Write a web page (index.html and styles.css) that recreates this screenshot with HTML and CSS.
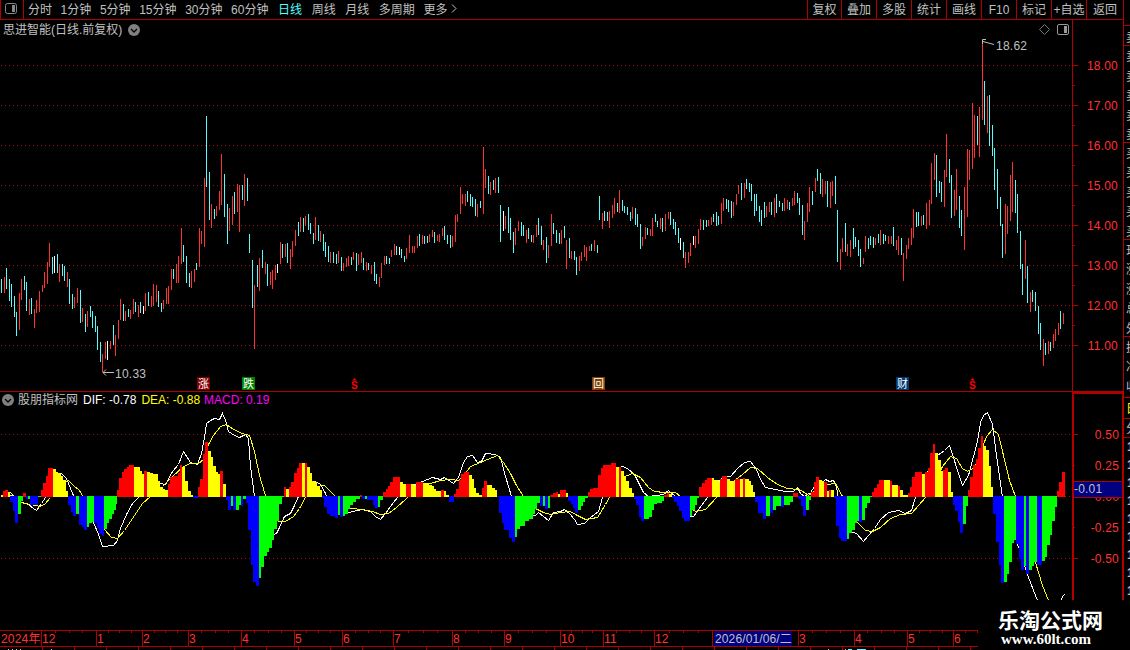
FILE: index.html
```
<!DOCTYPE html>
<html lang="zh-CN">
<head>
  <meta charset="UTF-8" />
  <title>思进智能 - 日线</title>
  <link rel="stylesheet" href="styles.css">
</head>
<body>

  <div class="terminal">
    <div class="main">
      <nav class="toolbar">
        <div class="layout-btn">
          <svg width="12" height="11"><rect x=".5" y=".5" width="11" height="10" rx="2" fill="none" stroke="#888"/><rect x="7" y="2" width="3" height="7" fill="#888"/></svg>
        </div>
        <div class="periods">
          <span>分时</span><span>1分钟</span><span>5分钟</span><span>15分钟</span><span>30分钟</span><span>60分钟</span>
          <span class="active">日线</span><span class="wide">周线</span><span class="wide">月线</span><span>多周期</span><span>更多</span>
          <svg class="more" width="6" height="9"><path d="M1 .5L5 4.5L1 8.5" fill="none" stroke="#c0c0c0"/></svg>
        </div>
        <div class="tools">
          <span>复权</span><span>叠加</span><span>多股</span><span>统计</span><span>画线</span><span>F10</span><span>标记</span><span>+自选</span><span>返回</span>
        </div>
      </nav>

      <section class="panel price">
        <header class="panel-head">
          <span>思进智能(日线.前复权)</span>
          <svg class="chevron" width="12" height="12"><circle cx="6" cy="6" r="6" fill="#808080"/><path d="M3 5L6 8L9 5" fill="none" stroke="#000" stroke-width="1.3"/></svg>
          <div class="head-icons">
            <svg width="11" height="11"><path d="M5.5 .5L10.5 5.5L5.5 10.5L.5 5.5Z" fill="none" stroke="#777"/></svg>
            <svg width="12" height="11"><rect x=".5" y=".5" width="11" height="10" rx="1.5" fill="none" stroke="#999"/><rect x="7" y="2" width="3" height="7" fill="#999"/></svg>
          </div>
        </header>
        <div class="plot">
          <svg id="price" width="1078" height="351" viewBox="0 40 1078 351"></svg>
          <div class="scale price-scale">
            <span>18.00</span><span>17.00</span><span>16.00</span><span>15.00</span><span>14.00</span><span>13.00</span><span>12.00</span><span>11.00</span>
          </div>
        </div>
      </section>

      <section class="panel macd">
        <div class="macd-body">
          <header class="panel-head">
            <svg class="chevron" width="12" height="12"><circle cx="6" cy="6" r="6" fill="#808080"/><path d="M3 5L6 8L9 5" fill="none" stroke="#000" stroke-width="1.3"/></svg>
            <span>股朋指标网</span>
            <span class="dif">DIF: -0.78</span>
            <span class="dea">DEA: -0.88</span>
            <span class="val">MACD: 0.19</span>
          </header>
          <svg id="macd" width="1078" height="190" viewBox="0 410 1078 190"></svg>
        </div>
        <div class="scale macd-scale">
          <span>0.50</span><span>0.25</span><span>0.00</span><span>-0.25</span><span>-0.50</span>
          <b class="cursor-value">-0.01</b>
        </div>
      </section>

      <footer class="timeline">
        <svg id="time" width="978" height="20" viewBox="0 630 978 20"></svg>
      </footer>
    </div>

    <aside class="quotes">
      <svg id="quotes" width="7" height="650"></svg>
    </aside>

    <div class="brand">
      <strong>乐淘公式网</strong>
      <em>www.60lt.com</em>
    </div>
  </div>

  <script src="chart.js"></script>
</body>
</html>
```

FILE: styles.css
```
* {
  box-sizing: border-box;
}
body {
  margin: 0;
  background: #000;
  color: #c0c0c0;
  font: 12px/14px "Liberation Sans", "Noto Sans CJK SC", sans-serif;
}
svg {
  display: block;
}
.terminal {
  position: relative;
  display: flex;
  width: 1130px;
  height: 650px;
  overflow: hidden;
}
.main {
  width: 1123px;
  flex: none;
}
.toolbar {
  display: flex;
  height: 20px;
  border-bottom: 1px solid #b00000;
}
.layout-btn {
  width: 24px;
  padding: 3px 0 0 4px;
  border-left: 1px solid #b00000;
  border-right: 1px solid #b00000;
}
.periods {
  display: flex;
  gap: 8.6px;
  padding: 3px 0 0 4px;
  white-space: nowrap;
}
.periods .active {
  color: #54fcfc;
  margin: 0 1px;
}
.periods .wide {
  margin-right: 1px;
}
.periods .more {
  margin: 1px 0 0 -5px;
}
.tools {
  display: grid;
  grid-template-columns: 34px repeat(7, 35px) 37px;
  margin-left: auto;
}
.tools span {
  padding-top: 3px;
  border-left: 1px solid #b00000;
  text-align: center;
  white-space: nowrap;
}
.panel-head {
  display: flex;
  align-items: center;
}
.price .panel-head {
  height: 20px;
  padding: 0 0 1px 3px;
}
.price .chevron {
  margin-left: 6px;
}
.head-icons {
  display: flex;
  gap: 7px;
  margin-left: auto;
  margin-right: 54px;
}
.plot {
  display: flex;
}
#price {
  flex: none;
  overflow: visible;
}
.scale {
  display: flex;
  flex-direction: column;
  color: #ff3232;
  text-align: right;
  letter-spacing: .2px;
}
.price-scale {
  flex: 1;
  padding: 5px 5px 0 0;
}
.price-scale span {
  height: 40px;
  line-height: 42px;
}
.price {
  height: 372px;
  border-bottom: 1px solid #b00000;
}
.macd {
  display: flex;
  height: 208px;
}
.macd-body {
  width: 1072px;
}
#macd {
  position: relative;
  z-index: 1;
}
.macd .panel-head {
  height: 18px;
  padding: 0 0 2px 2px;
}
.macd .panel-head span {
  margin-left: 5px;
}
.macd .panel-head .chevron + span {
  margin-left: 4px;
}
.macd .panel-head .val {
  margin-left: 4px;
}
.dif {
  color: #fff;
}
.dea {
  color: #ff0;
}
.val {
  color: #f0f;
}
.macd-scale {
  position: relative;
  width: 52px;
  flex: none;
  padding: 26px 3px 0 0;
  border: 2px solid #b00000;
  border-bottom: 0;
}
.macd-scale span {
  height: 31px;
  line-height: 31px;
}
.cursor-value {
  position: absolute;
  left: 0;
  right: 0;
  top: 87px;
  height: 17px;
  border: solid #b00000;
  border-width: 1px 0;
  background: #000080;
  color: #c0c0c0;
  font-weight: normal;
  line-height: 15px;
  text-align: left;
}
.timeline {
  margin-top: 30px;
}
.quotes {
  width: 7px;
}
.brand {
  position: absolute;
  right: 0;
  bottom: 0;
  width: 152px;
  height: 50px;
  padding: 8px 0 0 20px;
  background: #000;
  color: #fff;
}
.brand strong {
  display: block;
  font: bold 21px/22px "Noto Sans CJK SC", sans-serif;
}
.brand em {
  display: block;
  margin-left: 3px;
  font: bold 15px/19px "Liberation Serif", serif;
}
svg text {
  font-size: 12px;
}
#time text {
  letter-spacing: .2px;
}
```

FILE: chart.js
```
const RED = '#b00000';
const colors = { r: '#ff3232', c: '#54fcfc', w: '#ffffff' };
const macdColors = { r: '#ff0000', y: '#ffff00', b: '#0000ff', g: '#00ff00' };

// x, color, high-low
const candles = `
1c279-293 4r277-293 6c268-289 9c279-301 11c284-307 14c296-317 16c312-336 19r293-330 21r279-300 24c276-290
26c282-311 29r299-315 31c298-314 34r309-328 36r300-313 39r291-312 42r285-292 44r272-288 47r262-284 49r243-267
52c257-274 54w256-273 57c254-273 59r264-282 62c264-276 64c266-281 67r272-287 69c279-304 72c294-309 74r297-308
77r288-303 80c290-323 82r308-322 85c314-332 87r311-327 90c306-317 92c311-328 95c316-332 97c326-350 100c342-362
102r354-372 105r342-359 107w341-360 110r341-349 113c325-345 115r335-356 118r320-339 120r299-320 123c304-321 125r311-321
128c309-317 130r310-319 133r299-314 135c302-312 138r305-317 140c302-313 143w306-314 145r293-311 148c292-306 151r296-307
153r284-306 156r285-302 158c291-307 161c303-312 163r300-309 166r288-304 168r286-304 171r269-290 173c269-279 176r264-283
178r256-283 181r228-264 183c245-262 186c256-283 189c273-287 191r271-288 194r269-282 196c263-270 199r228-267 201r231-244
204r178-247 206c116-187 209c172-220 211r204-228 214c209-219 216r206-216 219r191-210 221r154-205 224c174-217 227c204-244
229r208-231 232r196-225 234c192-214 237r184-212 239r185-232 242c185-200 244r174-206 247c178-201 249c234-253 252c260-308
254r285-349 257c265-287 259r258-291 262c250-268 265r262-274 267c264-286 270r272-285 272r270-289 275r265-280 277w264-273
280r242-264 282c244-258 285r244-257 287c243-263 290r249-269 292r241-257 295r230-246 298c222-236 300r217-232 303c218-232
305r216-226 308c214-230 310c223-234 313c233-244 315r217-240 318c225-241 320r231-242 323c234-251 325c242-257 328c246-262
330r252-263 333c252-263 336c254-264 338r251-263 341c257-271 343r263-271 346r258-267 348r256-266 351c257-265 353r252-260
356c253-271 358r254-265 361r252-263 363c258-270 366r262-271 368c263-270 371r265-274 374c262-281 376c274-284 379r277-287
381r263-278 384r256-265 386c256-264 389c258-264 391r250-257 394r244-255 396c246-255 399w247-255 401c249-258 404c256-262
406r248-259 409r235-253 412r246-253 414r246-253 417r236-248 419c234-246 422r235-244 424c236-244 427c236-243 429r234-242
432r230-237 434c232-243 437r235-241 439r234-242 442r228-236 444c226-240 447c235-244 450c235-248 452r236-247 455r215-242
457r214-222 460r187-214 462r194-204 465r194-206 467c191-202 470c194-206 472c197-207 475c199-216 477r204-217 480c201-208
483r147-214 485r169-188 488c176-194 490r182-195 493c180-190 495r178-193 498c177-193 500c205-242 503w211-231 505r216-229
508c207-233 510c218-240 513c232-253 515r228-245 518r221-231 521c222-236 523c225-236 526r230-243 528c228-239 531c235-242
533r235-243 536r225-237 538c218-235 541c226-245 543r240-250 546c237-263 548r245-258 551r214-246 553c223-234 556c230-243
559c233-244 561r230-244 564c226-238 566r240-269 569c238-258 571r251-259 574c251-260 576c257-275 579r256-271 581r252-261
584r245-257 586r247-261 589r246-251 591c244-251 594r240-251 597c245-253 599c196-220 602r213-229 604c211-221 607c212-221
609r211-228 612r205-218 614r198-214 617c203-212 619r190-213 622c200-211 624c206-213 627c207-215 630c212-221 632r207-219
635c208-225 637c214-227 640c224-249 642r237-246 645r227-239 647c228-235 650r229-236 652r218-236 655c214-222 657c221-227
660r218-229 662c218-232 665r214-231 668r212-219 670c212-225 673c219-229 675c222-235 678c228-243 680w238-250 683c242-258
685r252-268 688r252-263 690r243-256 693w236-245 695r236-248 698r229-244 700r219-230 703c220-230 706c220-227 708r220-226
711r217-225 713c214-222 716c212-226 718c216-225 721r203-224 723r198-211 726c199-209 728c200-212 731c201-218 733r202-216
736r194-205 738r185-194 741c183-200 744r183-198 746c179-189 749c183-192 751c184-201 754c194-216 756c194-211 759c206-222
761c210-226 764c202-218 766r206-217 769r202-212 771c202-215 774r198-217 776c194-213 779c201-207 782c203-211 784r198-211
787r200-209 789c202-210 792r198-206 794r191-205 797c193-203 799c198-215 802c205-235 804r221-240 807r203-222 809r187-212
812c191-205 815r178-192 817c169-181 820c173-194 822r179-197 825r181-194 827c181-207 830r182-208 832r181-196 835c176-204
837c210-262 840r249-270 842r238-252 845c223-252 847r244-256 850r240-257 853c228-249 855c237-247 858c240-256 860c249-267
863r258-264 865r236-252 868c238-249 870c236-245 873c237-248 875r238-245 878c234-243 880r230-245 883c234-244 885c235-241
888r236-244 891r236-244 893c227-246 896r240-250 898r236-255 901c238-255 903r253-281 906r245-259 908r238-249 911r228-245
913r209-238 916c212-227 918c212-226 921r216-226 923c215-225 926r203-229 929r200-225 931r163-204 934r153-180 936c155-197
939c181-193 941c182-202 944r170-207 946r134-177 949c159-183 951c175-218 954r190-216 956r169-210 959c196-228 961c210-236
964r187-250 967r149-217 969r150-180 972r103-169 974r115-158 977c116-145 979r107-157 982r42-120 984c81-125 987r96-133
989c95-146 992c125-156 994c148-190 997c169-209 1000c197-226 1002c224-258 1005r204-254 1007r206-234 1010r175-221 1012r162-212
1015c180-213 1017c194-233 1020c231-269 1022c264-295 1025r240-279 1027c266-303 1030r292-312 1032c290-302 1035c292-311 1038c306-334
1040c323-350 1043r339-366 1045c343-355 1048r341-354 1050c342-351 1053r334-348 1055r329-341 1058r323-335 1060c311-329 1063r313-324`;

// left edge, color, end of the bar; each bar runs up to the next one
const bars = `
1y495 3r491 5r490 8y492 10b502 13b511 15b523 18g514 21g501 23r493 26b499 28g499 30b505 38g497 41r490 43r483 46r476 48r468
53y469 56y472 58y473 61y476 63y480 66y491 68b505 71b512 73b516 76g514 79b525 82b527 84b530 87g527 89g523 92g522 94b523 97b528
99b534 102b536 104g529 107g523 109g519 112g514 114g510 116g504 117r490 119r478 122r472 124r469 127r467 129r465 134y467 140y471
142y474 144r471 147y472 150y473 153y474 158y481 160y487 163y489 165y490 168r484 170r477 173r476 178r473 180r465 182y467 185y481
188y491 191y495 193b498 198r487 200r479 203r454 205r442 208y451 211y457 213y466 216y472 218y474 220r471 223y484 226b500 228b510
231g506 233b510 236g510 239g505 241b506 243g499 246b503 248b530 251b565 253b582 256b586 259g578 261g567 264g556 267g552 269g548
272g540 274g529 277g521 279g504 282g497 284r487 286y489 289r487 291r482 294r473 297r468 299r463 302y463 305r463 307y467 310y473
312y481 315y482 317y486 320y490 322b498 324b507 327b514 330b516 335b518 338g515 340b517 343g516 345g514 348g509 350g505 353g502
356g499 360r495 362b499 365g499 367b500 373b505 375b508 378g507 380g500 383r492 386r489 388r486 390r482 393r477 400y482 403y484
406r484 411y484 414y485 416r482 423y483 429y485 432y486 434y489 436y491 441r490 444y491 446y495 449b502 454r494 456r489 459r480
461r474 464r472 469y475 472y479 474y488 476y493 479y495 482r488 484r481 487y485 492y488 495y490 497b497 499b513 502b523 504b530
509b538 512b542 515g537 517g529 520g526 525g521 529g519 533g514 535g509 537g503 540b506 543g506 545b509 548g508 550r495 553r493
556r492 558y494 560r490 566y493 568b501 571b504 573b508 575b513 578g510 581g506 583g502 585g498 588r492 590r489 593r488 598r475
601r468 603r465 611r463 616y467 619r467 621y471 624y476 626y481 629y488 632y493 634b499 636b505 639b517 641b521 644g519 649g517
652g510 654g504 657g503 662g501 664r495 667r493 669y494 672b498 674b502 677b506 679b511 682b518 684b521 690g516 692g510 695g505
697g498 699r487 702r483 705r480 707r478 712y478 714y480 719y482 720r479 722r476 727y479 730y481 735r479 740y479 743r478 745y479
749y481 751y485 753y492 755b502 758b513 763b519 766g516 770b513 773g510 776g506 781b507 784g505 790g502 793r493 798b499 801b506
803b516 806g510 809g500 811r492 814r482 816r477 819y480 822y481 824r482 827y491 829r490 831y490 834b498 836b526 839b538 841b541
847g539 849g533 852g530 855g523 857g521 859b522 862g520 865g508 867g503 870g497 872r492 874r488 877r484 879r480 884y480 890r481
892y485 898r486 900y490 903y495 908r493 910r487 912r477 915r472 922y474 925r472 928r468 930r453 933r444 935y453 938y460 941y471
943r470 945r468 948y472 951y492 953b505 955b511 958b522 960b533 963g524 966g506 968r490 970r477 973r465 976r459 978r448 981r436
983y446 986y450 989y466 991y487 993b514 996b542 999b565 1001b583 1004g582 1007g574 1009g562 1012g543 1014g540 1016b544 1019b559
1021b570 1024g566 1026b574 1029g570 1032g566 1034g562 1037b565 1042g561 1045g557 1047g545 1050g535 1052g521 1055g507 1057r491
1059r482 1062r472 1065r496`;

const dif = `1,495 10,492 17,500 22,502 28,504 33,508 36,510 41,503 45,497 50,485 57,476 61,473 66,478 70,488 75,500 82,510 88,516
93,522 98,534 102,546 113,545 117,540 120,528 126,514 132,503 138,497 147,492 155,486 160,483 165,484 172,471 178,464 181,456
183,451 190,462 197,464 201,453 204,437 206,423 210,420 214,418 219,419 222,413 225,420 228,431 234,435 239,437 245,434 248,438
250,466 254,496 258,520 264,532 270,535 276,533 279,527 284,516 290,513 294,505 298,496 302,486 308,481 315,481 320,484 325,493
329,502 335,513 345,513 352,511 362,509 370,511 375,516 380,519 385,513 390,506 397,497 405,489 415,484 422,481 432,477 440,479
444,477 450,481 453,483 458,477 463,462 467,456 472,455 477,462 481,461 485,453 495,454 500,457 505,476 511,496 518,508 528,516
535,515 538,512 543,516 548,520 553,512 560,511 564,509 569,513 574,519 577,524 584,523 590,517 598,511 602,497 607,480 614,469
622,466 627,468 634,474 639,484 643,492 648,496 663,494 668,490 675,496 683,508 688,516 693,516 698,509 707,497 715,486 722,477
730,476 737,468 744,462 750,461 756,469 760,479 765,487 775,489 785,491 793,491 797,487 800,493 804,496 810,492 816,483 823,481
825,479 829,481 833,480 836,486 838,500 843,520 850,531 856,533 863,541 868,535 874,528 880,519 888,512 898,510 905,513 911,510
915,497 920,485 928,470 936,455 940,453 944,450 949,445 953,457 957,470 962,485 968,475 973,456 977,441 980,422 983,415 987,412
992,424 996,455 1002,497 1006,512 1012,530 1020,552 1028,577 1037,600`;

const dea = `1,496 12,495 20,502 30,504 40,506 45,503 50,497 56,488 62,482 68,480 73,485 79,490 83,497 90,508 97,518 104,529 111,537
117,538 124,530 132,518 142,503 150,496 162,486 172,476 183,466 190,463 198,463 203,459 208,444 213,435 220,426 226,424 233,429
242,433 249,435 254,451 259,475 265,495 272,512 278,521 285,521 293,516 299,508 306,495 315,486 324,485 336,497 345,505 350,508
362,509 372,511 380,514 388,513 396,507 405,499 415,490 430,483 440,480 450,479 458,480 464,474 470,466 480,462 487,459 497,455
503,462 510,473 516,485 523,496 535,508 543,512 550,514 560,512 570,511 577,515 585,519 597,517 605,504 613,490 622,477 632,473
640,477 648,487 654,491 664,492 675,492 680,496 688,506 695,511 705,509 717,496 730,483 742,474 750,467 757,468 767,477 777,484
787,488 797,489 801,490 808,495 815,490 827,484 835,483 842,496 850,513 857,522 865,530 872,531 880,527 890,518 900,514 911,513
918,505 925,497 935,480 942,466 950,456 956,458 962,468 967,471 974,467 980,452 986,436 992,429 998,434 1003,455 1009,480
1015,496 1025,530 1035,562 1042,585 1048,600`;

function rect(x, y, w, h, fill) {
  return `<rect x="${x}" y="${y}" width="${w}" height="${h}" fill="${fill}"/>`;
}
function text(x, y, s, fill, extra = '') {
  return `<text x="${x}" y="${y}" fill="${fill}" ${extra}>${s}</text>`;
}
function grid(y) {
  return `<path d="M1 ${y + .5}H1072" stroke="#a01010" stroke-dasharray="1 3"/>`;
}
function line(points, stroke) {
  return `<polyline points="${points}" fill="none" stroke="${stroke}" shape-rendering="crispEdges" transform="translate(.5 .5)"/>`;
}
function badge(x, s, bg) {
  return rect(x, 377, 13, 13, bg) + text(x + 1, 388, s, '#fff', 'style="font-size:11px"');
}
function split(s) {
  return s.trim().split(/\s+/);
}

function drawPrice() {
  let out = '';
  for (let y = 65; y < 380; y += 40) out += grid(y) + rect(1073, y, 5, 1, RED);
  for (let y = 85; y < 340; y += 40) out += rect(1073, y, 2, 1, RED);
  out += rect(1072, 20, 1, 371, RED);
  for (const c of split(candles)) {
    const [, x, k, hi, lo] = c.match(/(\d+)([rcw])(\d+)-(\d+)/);
    out += rect(x, hi, 1, lo - hi, colors[k]);
  }
  out += '<path d="M103 372.5H114M106 369.5L103 372.5L106 375.5M994 44.5L983 41.5M986 39.5H982.5V44" fill="none" stroke="#c0c0c0"/>';
  out += text(115, 378, '10.33', '#c0c0c0', 'textLength="31"') + text(996, 50, '18.62', '#c0c0c0', 'textLength="31"');
  out += badge(197, '涨', '#800000') + badge(242, '跌', '#008000') + badge(592, '回', '#804000') + badge(896, '财', '#003870');
  for (const x of [351, 969]) {
    out += text(x, 389, 'S', '#f00', 'style="font-size:10px;font-weight:bold"') + `<path d="M${x + 1} 380.5L${x + 3.5} 378L${x + 6} 380.5Z" fill="#f00"/>`;
  }
  document.getElementById('price').innerHTML = out;
}

function drawMacd() {
  let out = grid(434) + grid(496) + grid(558) + line(dif, '#fff') + line('1061,600 1062,596 1064,594', '#fff') + line(dea, '#ff0');
  for (const y of [434, 558]) out += rect(1074, y, 4, 1, RED);
  for (const y of [465, 527]) out += rect(1074, y, 1, 1, RED);
  const list = split(bars).map(b => b.match(/(\d+)([rybg])(\d+)/).slice(1));
  for (let i = 0; i < list.length - 1; i++) {
    const [x, k, y] = list[i];
    const w = list[i + 1][0] - x;
    out += y < 497 ? rect(x, y, w, 497 - y, macdColors[k]) : rect(x, 496, w, y - 496, macdColors[k]);
  }
  document.getElementById('macd').innerHTML = out;
}

function drawTime() {
  const months = [[41, '12'], [96, '1'], [142, '2'], [188, '3'], [241, '4'], [294, '5'], [342, '6'], [393, '7'], [452, '8'],
    [504, '9'], [560, '10'], [603, '11'], [654, '12'], [712, ''], [798, '3'], [854, '4'], [907, '5'], [953, '6'], [1000, '']];
  let out = rect(0, 630, 978, 1, RED) + rect(0, 646, 978, 1, RED) + text(1, 643, '2024年', '#ff3232');
  months.forEach(([x, name], i) => {
    out += rect(x, 631, 1, 15, RED);
    if (name) out += text(x + 1, 643, name, '#ff3232');
    const next = months[i + 1];
    if (next) for (let k = 1; k < 4; k++) out += rect(Math.round(x + (next[0] - x) * k / 4), 631, 1, 2, RED);
  });
  for (let x = 42; x < 978; x += 32) out += rect(x, 647, 1, 3, RED);
  for (const x of [8, 12, 16, 20, 51, 828, 845]) out += rect(x, 649, 1, 1, '#c0c0c0');
  out += rect(848, 649, 4, 1, colors.c) + rect(857, 649, 9, 1, colors.c);
  out += rect(714, 631, 78, 15, '#000080') + text(715, 643, '2026/01/06/二', '#c0c0c0', 'textLength="77"');
  document.getElementById('time').innerHTML = out;
}

function drawQuotes() {
  let out = rect(0, 0, 1, 392, RED);
  for (const y of [25, 45, 142, 239, 336, 397, 418, 437]) out += rect(0, y, 7, 1, RED);
  for (let y = 42; y < 142; y += 19.4) out += text(3, y, '卖', '#c0c0c0');
  for (let y = 158; y < 239; y += 19.4) out += text(3, y, '买', '#c0c0c0');
  [...'现涨涨总外换净收'].forEach((s, i) => {
    out += text(3, Math.round(255 + i * 19.4), s, '#c0c0c0');
  });
  out += text(3, 413, '日', '#ff0') + text(3, 433, '分', '#c0c0c0');
  for (let y = 451; y < 600; y += 18) out += text(4, y, '1', '#c0c0c0', 'font-weight="bold"');
  document.getElementById('quotes').innerHTML = out;
}

drawPrice();
drawMacd();
drawTime();
drawQuotes();
```
